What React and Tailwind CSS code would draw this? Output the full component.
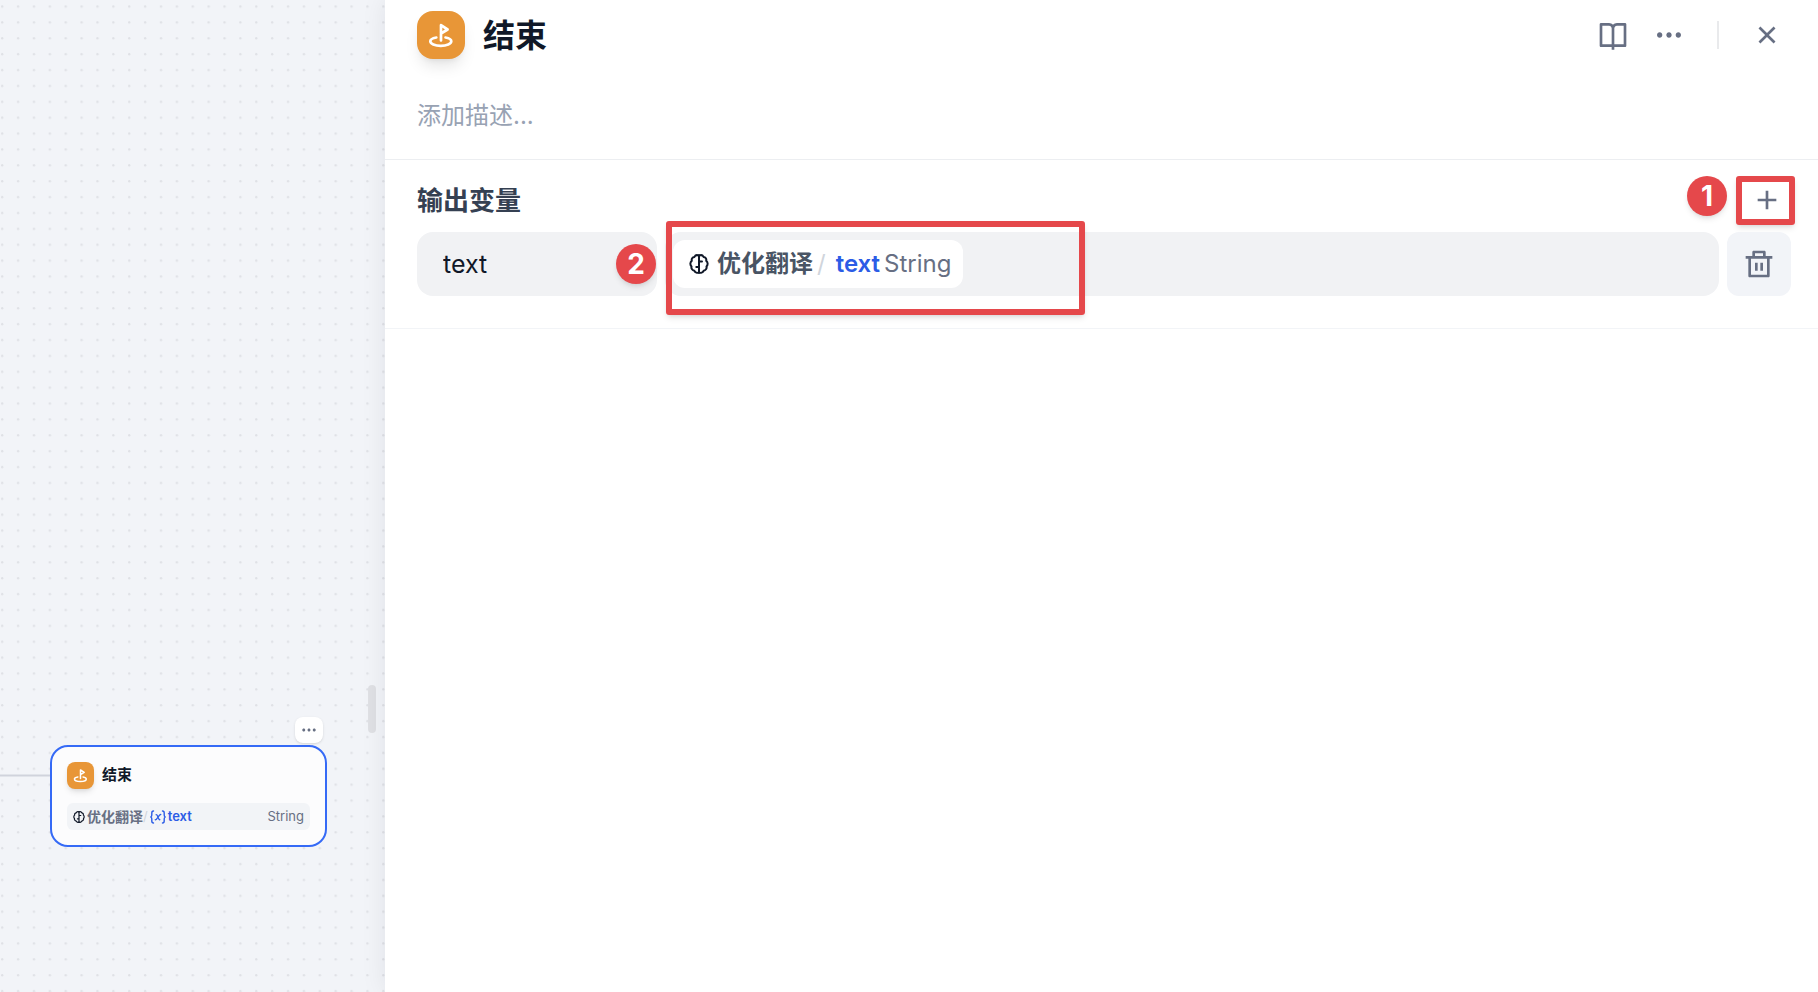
import React, { useState } from 'react';
import { RiAddLine, RiBookOpenLine, RiCloseLine, RiDeleteBinLine, RiMoreFill } from 'react-icons/ri';

const EndIcon = ({ className }) => (
  <svg viewBox="0 0 48 48" fill="none" stroke="white" strokeWidth="2.7" strokeLinecap="round" strokeLinejoin="round" className={className}>
    <path d="M24 29.5V14.2l6.6 4.3-6.600 4" />
    <path d="M19.3 26.5c-3.6.6-6 2-6 3.8 0 2.6 4.6 4.5 10.5 4.5s10.5-1.9 10.5-4.5c0-1.8-2.4-3.2-5.8-3.8" />
  </svg>
);

const BrainIcon = ({ className }) => (
  <svg viewBox="0 0 20 20" fill="none" stroke="#101828" strokeWidth="2" strokeLinecap="round" strokeLinejoin="round" className={className}>
    <path d="M10 1.5C8 .8 6 1.3 5.4 3 3.4 3.2 2.3 5 2.8 6.8 1 8 .9 11 2.5 12.5 2 14.5 3.4 16.5 5.4 16.8 6.2 18.6 8.3 19.2 10 18.5" />
    <path d="M10 1.5C12 .8 14 1.3 14.6 3 16.6 3.2 17.7 5 17.2 6.8 19 8 19.1 11 17.5 12.5 18 14.5 16.6 16.5 14.6 16.8 13.8 18.6 11.7 19.2 10 18.5" />
    <path d="M10 1.5v17M10 7.5h3M10 13H7.3" />
  </svg>
);

const VariableIcon = ({ className }) => (
  <svg viewBox="0 0 16 14" fill="none" stroke="#2b5ce6" strokeWidth="1.4" strokeLinecap="round" strokeLinejoin="round" className={className}>
    <path d="M3.5 1c-1.5 0-1.7.8-1.7 2v2c0 1-.3 1.600-1 2 .7.4 1 1 1 2v2c0 1.200.2 2 1.700 2" />
    <path d="M12.5 1c1.5 0 1.7.8 1.7 2v2c0 1 .3 1.600 1 2-.7.4-1 1-1 2v2c0 1.200-.2 2-1.700 2" />
    <path d="M5.3 9.8c1.7.5 3.7-5.6 5.4-5.3M6.2 4.6c1.8-.3 1.8 5.3 3.6 5.1" />
  </svg>
);

const StepBadge = ({ children, className }) => (
  <span className={`absolute flex size-10 items-center justify-center rounded-full bg-[#e5484b] text-[28px] leading-none font-bold text-white shadow-md ${className}`}>
    {children}
  </span>
);

const EndNode = () => (
  <div className="absolute top-[745px] left-[50px] w-[277px]">
    <button aria-label="更多" className="absolute -top-7 right-1 flex h-[26px] w-7 items-center justify-center rounded-lg bg-white text-[#676f83] shadow-sm">
      <RiMoreFill size={18} />
    </button>
    <div className="rounded-[18px] border-2 border-[#356af6] bg-[#fcfcfd] p-[15px]">
      <div className="flex h-[27px] items-center gap-2">
        <span className="size-[27px] rounded-lg bg-[#e89637] shadow-md">
          <EndIcon className="size-full" />
        </span>
        <h2 className="text-[15px] font-semibold text-[#101828]">结束</h2>
      </div>
      <div className="mt-3.5 flex h-[27px] items-center rounded-md bg-[#f2f4f7] px-1.5 text-[13px] text-[#676f83]">
        <BrainIcon className="mr-0.5 size-3" />
        <span className="text-[14px] font-semibold">优化翻译</span>
        <span className="text-[#d0d5dc]">/</span>
        <VariableIcon className="mx-0.5 h-3.5 w-4" />
        <span className="font-semibold text-[#2b5ce6]">text</span>
        <span className="ml-auto">String</span>
      </div>
    </div>
  </div>
);

const Canvas = () => (
  <section className="relative w-[385px] shrink-0 overflow-hidden bg-[#f2f4f8]">
    <svg className="absolute inset-0 size-full">
      <defs>
        <pattern id="dots" x="1" y="5.3" width="15.88" height="15.88" patternUnits="userSpaceOnUse">
          <circle cx="1.2" cy="1.2" r="1.2" fill="#dfe1e6" />
        </pattern>
      </defs>
      <rect width="100%" height="100%" fill="url(#dots)" />
      <path d="M0 775.5H50" stroke="#d0d3dc" strokeWidth="2" />
    </svg>
    <EndNode />
    <div className="absolute top-[685px] right-[9px] h-12 w-2 rounded-full bg-[#dfe0e4]" />
  </section>
);

const App = () => {
  const [name, setName] = useState('text');
  const [description, setDescription] = useState('');

  return (
    <div className="flex min-h-screen bg-white font-['Inter','Noto_Sans_CJK_SC',sans-serif]">
      <Canvas />
      <main className="relative min-w-0 flex-1 bg-white shadow-[0_0_24px_rgba(16,24,40,0.08)]">
        <header className="border-b border-[#eceef1] pt-[11px] pr-[27px] pb-6 pl-8">
          <div className="flex h-12 items-center">
            <span className="size-12 rounded-2xl bg-[#e89637] shadow-lg">
              <EndIcon className="size-full" />
            </span>
            <h1 className="ml-[18px] pt-0.5 text-[32px] leading-10 font-semibold text-[#101828]">结束</h1>
            <div className="mr-2 ml-auto flex items-center text-[#676f83]">
              <button aria-label="帮助文档"><RiBookOpenLine size={32} /></button>
              <button aria-label="更多" className="ml-6"><RiMoreFill size={32} /></button>
              <span className="mx-8 h-7 w-0.5 bg-[#e9eaec]" />
              <button aria-label="关闭"><RiCloseLine size={32} /></button>
            </div>
          </div>
          <input
            aria-label="描述"
            placeholder="添加描述..."
            className="mt-9 block h-10 w-full text-2xl outline-none placeholder:text-[#98a2b3]"
            value={description}
            onChange={(e) => setDescription(e.target.value)}
          />
        </header>

        <section className="border-b border-[#f2f4f7] pt-5 pr-[27px] pb-8 pl-8">
          <div className="flex h-[52px] items-start justify-between">
            <label htmlFor="output-name" className="text-[26px] leading-[42px] font-semibold text-[#354052]">输出变量</label>
            <div className="relative flex h-10 items-center text-[#676f83]">
              <button aria-label="添加变量" className="mr-2"><RiAddLine size={32} /></button>
              <span className="pointer-events-none absolute -top-1 -right-1 h-[49px] w-[59px] rounded-[3px] border-6 border-[#e5484b] shadow-md" />
              <StepBadge className="-top-1 right-16">1</StepBadge>
            </div>
          </div>
          <div className="relative flex gap-2">
            <input
              id="output-name"
              className="h-16 w-60 rounded-2xl bg-[#f1f2f4] px-[26px] text-[25px] text-[#101828] outline-none"
              value={name}
              onChange={(e) => setName(e.target.value)}
            />
            <div className="flex h-16 flex-1 items-center rounded-2xl bg-[#f1f2f4] px-2">
              <button className="flex h-12 items-center rounded-xl bg-white px-3 text-2xl text-[#676f83]">
                <BrainIcon className="mx-1 size-5" />
                <span className="ml-1 font-semibold text-[#495464]">优化翻译</span>
                <span className="mr-2.5 ml-1 text-[#d0d5dc]">/</span>
                <span className="mr-1 font-semibold text-[#2b5ce6]">text</span>
                <span>String</span>
              </button>
            </div>
            <button aria-label="删除变量" className="flex size-16 items-center justify-center rounded-xl bg-[#f2f4f8] text-[#676f83]">
              <RiDeleteBinLine size={32} />
            </button>
            <span className="pointer-events-none absolute -top-[11px] left-[249px] h-[94px] w-[419px] rounded-[3px] border-6 border-[#e5484b] shadow-md" />
            <StepBadge className="top-3 left-[199px]">2</StepBadge>
          </div>
        </section>
      </main>
    </div>
  );
};

export default App;
